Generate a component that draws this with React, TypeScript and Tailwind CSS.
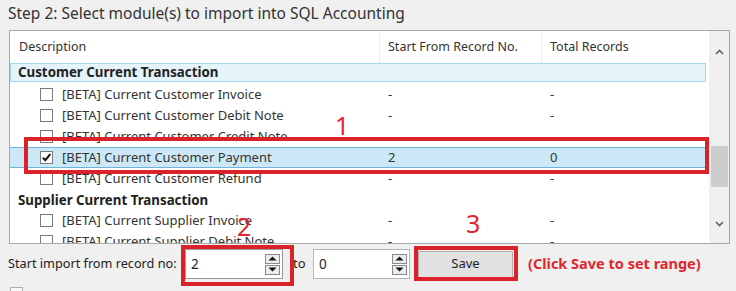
import React from 'react';

type Row =
  | { kind: 'group'; label: string; highlight?: boolean }
  | { kind: 'item'; label: string; start: string; total: string; checked?: boolean };

const rows: Row[] = [
  { kind: 'group', label: 'Customer Current Transaction', highlight: true },
  { kind: 'item', label: '[BETA] Current Customer Invoice', start: '-', total: '-' },
  { kind: 'item', label: '[BETA] Current Customer Debit Note', start: '-', total: '-' },
  { kind: 'item', label: '[BETA] Current Customer Credit Note', start: '-', total: '-' },
  { kind: 'item', label: '[BETA] Current Customer Payment', start: '2', total: '0', checked: true },
  { kind: 'item', label: '[BETA] Current Customer Refund', start: '-', total: '-' },
  { kind: 'group', label: 'Supplier Current Transaction' },
  { kind: 'item', label: '[BETA] Current Supplier Invoice', start: '-', total: '-' },
  { kind: 'item', label: '[BETA] Current Supplier Debit Note', start: '-', total: '-' },
];

function CheckBox({ checked }: { checked?: boolean }) {
  return (
    <span className="w-[13px] h-[13px] border border-[#7a7a7a] bg-white flex items-center justify-center shrink-0">
      {checked && (
        <svg width="11" height="11" viewBox="0 0 11 11">
          <path d="M1.8 5.6 L4.3 8.2 L9.3 2.2" fill="none" stroke="#111" strokeWidth="2" />
        </svg>
      )}
    </span>
  );
}

function Spinner({ value, focused }: { value: string; focused?: boolean }) {
  return (
    <div
      className={`h-[30px] bg-white border flex items-center pl-[5px] pr-[2px] ${
        focused ? 'w-[98px] border-[#9a9a9a]' : 'w-[97px] border-[#b5b5b5]'
      }`}
    >
      <span className="flex-1 text-[13.5px]">{value}</span>
      <div className="flex flex-col gap-[1px]">
        <span className="w-[15px] h-[10px] border border-[#8a8a8a] bg-[#ececec] flex items-center justify-center">
          <svg width="9" height="5" viewBox="0 0 9 5">
            <path d="M0.5 4.5 L4.5 0.5 L8.5 4.5 Z" fill="#111" />
          </svg>
        </span>
        <span className="w-[15px] h-[10px] border border-[#8a8a8a] bg-[#ececec] flex items-center justify-center">
          <svg width="9" height="5" viewBox="0 0 9 5">
            <path d="M0.5 0.5 L4.5 4.5 L8.5 0.5 Z" fill="#111" />
          </svg>
        </span>
      </div>
    </div>
  );
}

export default function App() {
  return (
    <div className="relative w-[736px] h-[291px] overflow-hidden bg-[#f0f0f0] text-[#222] font-['Noto_Sans','Open_Sans',sans-serif]">
      <div className="h-[30px] pl-[8px] pt-[2px] text-[15.5px] leading-[22px] text-[#333]">
        Step 2: Select module(s) to import into SQL Accounting
      </div>

      <div className="ml-[9px] w-[721px] h-[214px] border border-[#a8a8a8] bg-white flex">
        <div className="flex-1 flex flex-col overflow-hidden">
          <div className="h-[32px] flex items-center text-[12.5px] text-[#333] shrink-0">
            <div className="w-[370px] pl-[9px] h-full flex items-center border-r border-[#ececec]">Description</div>
            <div className="w-[162px] pl-[8px] h-full flex items-center border-r border-[#ececec]">Start From Record No.</div>
            <div className="pl-[8px]">Total Records</div>
          </div>

          {rows.map((r, i) =>
            r.kind === 'group' ? (
              <div key={i} className="h-[21px] shrink-0 pr-[3px]">
                <div
                  className={`h-[19px] flex items-center text-[13.3px] font-bold text-[#222] ${
                    r.highlight ? 'pl-[7px] bg-[#e5f3fb] border border-[#a5d5ef]' : 'pl-[8px] pt-[4px]'
                  }`}
                >
                  {r.label}
                </div>
              </div>
            ) : (
              <div
                key={i}
                className={`h-[21px] shrink-0 flex items-center text-[13px] text-[#333] mr-[3px] ${
                  r.checked ? 'bg-[#cce8f6] border-y border-[#6fb2dc]' : ''
                }`}
              >
                <div className="w-[370px] pl-[30px] flex items-center gap-[9px]">
                  <CheckBox checked={r.checked} />
                  <span>{r.label}</span>
                </div>
                <div className="w-[162px] pl-[8px]">{r.start}</div>
                <div className="pl-[8px]">{r.total}</div>
              </div>
            )
          )}
        </div>

        <div className="w-[20px] bg-[#f0f0f0] flex flex-col items-center">
          <div className="h-[24px] flex items-end justify-center">
            <svg width="9" height="6" viewBox="0 0 9 6">
              <path d="M1 5 L4.5 1.5 L8 5" fill="none" stroke="#606060" strokeWidth="1.6" />
            </svg>
          </div>
          <div className="h-[91px]" />
          <div className="w-[17px] h-[41px] bg-[#cdcdcd]" />
          <div className="flex-1" />
          <div className="h-[22px] flex items-start justify-center">
            <svg width="9" height="6" viewBox="0 0 9 6">
              <path d="M1 1 L4.5 4.5 L8 1" fill="none" stroke="#606060" strokeWidth="1.6" />
            </svg>
          </div>
        </div>
      </div>

      <div className="mt-[5px] h-[30px] flex items-center pl-[8px] text-[12.7px] text-[#222]">
        <span className="w-[177px]">Start import from record no:</span>
        <Spinner value="2" focused />
        <span className="ml-[10px] w-[20px] text-[13px]">to</span>
        <Spinner value="0" />
        <button className="ml-[8px] w-[95px] h-[27px] border border-[#adadad] bg-[#e1e1e1] text-[13px] text-[#222]">
          Save
        </button>
        <span className="ml-[15px] text-[14.5px] font-bold text-[#e0262e]">(Click Save to set range)</span>
      </div>

      <div className="absolute left-[10px] top-[287px] w-[13px] h-[13px] border border-[#b0b0b0] bg-[#f7f7f7]" />

      {/* annotations */}
      <div className="absolute left-[24px] top-[137px] w-[685px] h-[37px] border-4 border-[#d9222a]" />
      <div className="absolute left-[335px] top-[110px] text-[25px] leading-[30px] text-[#e0262e]">1</div>
      <div className="absolute left-[181px] top-[245px] w-[113px] h-[41px] border-4 border-[#d9222a]" />
      <div className="absolute left-[237px] top-[211px] text-[25px] leading-[30px] text-[#e0262e]">2</div>
      <div className="absolute left-[414px] top-[246px] w-[104px] h-[35px] border-4 border-[#d9222a]" />
      <div className="absolute left-[466px] top-[208px] text-[25px] leading-[30px] text-[#e0262e]">3</div>
    </div>
  );
}
